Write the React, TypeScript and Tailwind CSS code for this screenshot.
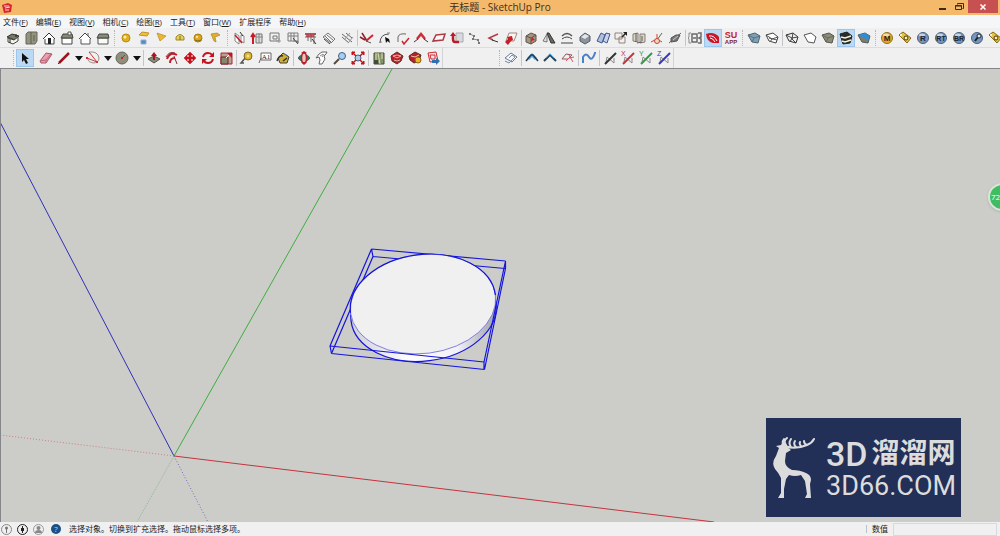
import React from 'react'

// every glyph is drawn on an 18x18 grid
const icons: Record<string, React.ReactNode> = {
  iso: (
    <>
      <path d="M3 8l5-3 7 2-4 4z" fill="#77776a" stroke="#33332c" />
      <path d="M4 9v4l5 2 5-3V8l-4 3z" fill="#f4f4ee" stroke="#44443c" />
      <path d="M6 10v4M12 5v3" stroke="#222" />
    </>
  ),
  top: (
    <>
      <path d="M4 5l2-2h9v9l-2 3H4z" fill="#94947e" stroke="#66665a" />
      <path d="M9 3v12M12 6v6" stroke="#5f5f50" />
    </>
  ),
  front: (
    <>
      <path d="M5 9v6h9V9" fill="#fff" stroke="#444" />
      <path d="M3 10l6-6 6 6" fill="#fff" stroke="#333" />
      <path d="M8 9h3v6H8z" fill="#222" stroke="none" />
    </>
  ),
  right: (
    <>
      <path d="M4 9h10v6H4z" fill="#fff" stroke="#444" />
      <path d="M5 5h9l1 4H3z" fill="#8a8a76" stroke="#44443c" />
      <path d="M10 3h3v3h-3z" fill="#fff" stroke="#555" />
    </>
  ),
  back: (
    <>
      <path d="M5 9v6h9V9" fill="#fff" stroke="#555" />
      <path d="M3 10l6-6 6 6" fill="#fff" stroke="#444" />
      <path d="M12 4v3" stroke="#666" />
    </>
  ),
  left: (
    <>
      <path d="M4 9h10v6H4z" fill="#fbfbf5" stroke="#555" />
      <path d="M5 5h9l1 4H3z" fill="#8a8a76" stroke="#44443c" />
    </>
  ),
  sphere: (
    <>
      <circle cx="9" cy="9" r="4" fill="#e2b01d" stroke="#b98a12" />
      <circle cx="8" cy="8" r="1.5" fill="#fff2a0" stroke="none" />
    </>
  ),
  planeBox: (
    <>
      <path d="M4 6l3-3 7 1-2 3z" fill="#f0bf3a" stroke="#c3922a" />
      <path d="M6 11h5v4H6z" fill="#5b86bd" stroke="#8fb0d8" />
    </>
  ),
  cone: <path d="M4 4l9 3-6 5z" fill="#ecb52c" stroke="#b98a2a" strokeWidth="0.7" />,
  dome: (
    <>
      <path d="M5 11V8q4-5 8 0v3z" fill="#e6cf58" stroke="#9a8a2a" />
      <path d="M9 7v4" stroke="#7d6f20" />
    </>
  ),
  sphereDark: (
    <>
      <circle cx="9" cy="9" r="4" fill="#dba61e" stroke="#a67b12" />
      <path d="M6 11q3 2 6 0" stroke="#8a6a14" />
      <circle cx="8" cy="8" r="1.2" fill="#ffe98c" stroke="none" />
    </>
  ),
  fan: (
    <>
      <path d="M4 5l6-1 3 2-5 2 1 5-2-1z" fill="#dfb02c" stroke="#a8842a" strokeWidth="0.7" />
      <path d="M9 8l3 4" stroke="#fff" />
    </>
  ),
  section: (
    <>
      <path d="M5 4l4 3v8l-4-3zM11 6l3 1v7l-3-2z" fill="#fff" stroke="#888" />
      <path d="M5 6l7 8" stroke="#c3202c" strokeWidth="1.5" />
      <path d="M10 3l3 4" stroke="#333" />
    </>
  ),
  post: (
    <>
      <path d="M8 5h6v9H8z" fill="#ddd" stroke="#777" />
      <path d="M11 4v10M8 8h7" stroke="#888" />
      <path d="M5 15V6M3 8l2-3 2 3" stroke="#cb1b27" strokeWidth="2" />
    </>
  ),
  squares: (
    <>
      <path d="M4 4h9v8H4zM7 7h4v3H7z" stroke="#777" />
      <path d="M10 12h5M13 9v5" stroke="#999" />
    </>
  ),
  gridIcon: (
    <>
      <path d="M4 4h10v8H4zM4 7h10M7 4v8M10 4v9" stroke="#7c7c7c" />
      <path d="M9 9l5 6M12 13h3" stroke="#444" />
    </>
  ),
  redGrid: (
    <>
      <path d="M3 5h11M3 8h11M6 5v7M9 5v8M12 5v10" stroke="#6d6d6d" />
      <path d="M3 5h11M4 7h8" stroke="#ba3540" strokeWidth="1.5" />
      <path d="M10 10l4 5" stroke="#333" />
    </>
  ),
  stairs: (
    <>
      <path d="M3 8l5-4 7 6-4 4zM5 7l6 6M7 6l6 5" fill="#f4f4f4" stroke="#777" />
      <path d="M4 10l6 5" stroke="#444" />
    </>
  ),
  hatch: (
    <>
      <path d="M4 8l7 6M4 5l10 8M8 4l6 5" stroke="#666" />
      <path d="M6 11l6-7M10 14l5-6" stroke="#999" />
    </>
  ),
  checkRed: (
    <>
      <path d="M4 4l5 8M2 8l5 3" stroke="#8b1f2b" strokeWidth="1.5" />
      <path d="M8 12l7-6" stroke="#cc2635" strokeWidth="2" />
      <path d="M8 12l5 2" stroke="#555" />
    </>
  ),
  arcCursor: (
    <>
      <path d="M4 14Q4 5 13 5" stroke="#555" />
      <path d="M9 8l1 6 1.5-2 2.5 2-1-4z" fill="#111" stroke="none" />
      <path d="M3 13h3M11 4h3" stroke="#888" />
    </>
  ),
  arcCheck: (
    <>
      <path d="M4 13V8q1-4 8-3" stroke="#666" />
      <path d="M8 12l2 3 5-6" stroke="#cf2333" strokeWidth="1.5" />
    </>
  ),
  peak: (
    <>
      <path d="M5 10l4-5 4 5" stroke="#d02b3a" strokeWidth="2.5" />
      <path d="M2 13l4-3M12 10l4 3" stroke="#333" />
    </>
  ),
  quad: <path d="M6 6l9-1-2 6-10 1z" fill="#fdf6f6" stroke="#a83a44" strokeWidth="1.5" />,
  returnArrow: (
    <>
      <path d="M8 4h7v9H8z" fill="#d8dade" stroke="#a6a9b0" />
      <path d="M11 13H7q-2 0-2-3V6" stroke="#b81e2a" strokeWidth="2.5" />
      <path d="M2 7l3-4 3 4z" fill="#b81e2a" stroke="none" />
    </>
  ),
  zigzag: (
    <>
      <path d="M4 5l4 2-1 3 5 1 1 3" stroke="#888" />
      <path d="M3 4h2v2H3zM7 6h2v2H7zM6 9h2v2H6zM11 10h2v2h-2zM12 13h2v2h-2z" fill="#777" stroke="none" />
    </>
  ),
  angle: (
    <>
      <path d="M14 5L5 9l4 2" stroke="#b23a45" strokeWidth="1.5" />
      <path d="M8 11l6 2" stroke="#333" />
    </>
  ),
  paperArrow: (
    <>
      <path d="M7 4h8l-3 8H4z" fill="#fbf6ee" stroke="#9c8a84" />
      <path d="M10 7l1 4-2 1-3 4-3-3 3-3-1-2z" fill="#cb1b27" stroke="none" />
    </>
  ),
  brownCube: (
    <>
      <path d="M4 7l5-3 5 2v6l-5 3-5-2z" fill="#a59580" stroke="#5e554a" />
      <path d="M4 7l5 2v6M9 9l5-3" stroke="#5e554a" />
      <path d="M10 8l3 3-4 1z" fill="#c22" stroke="none" />
    </>
  ),
  fins: (
    <>
      <path d="M3 12l4-7v8z" fill="#e4e4e4" stroke="#777" />
      <path d="M7 4h2l6 10h-4z" fill="#6a6a60" stroke="#333" />
    </>
  ),
  doubleArc: (
    <>
      <path d="M4 7q5-5 10 0" stroke="#555" strokeWidth="1.5" />
      <path d="M4 10q5-4 10 0M3 14h12" stroke="#444" />
    </>
  ),
  greyCube: (
    <>
      <path d="M4 8l5-4 5 3v5l-5 3-5-3z" fill="#8c939b" stroke="#555c66" />
      <path d="M5 8l4-3 4 2-4 3z" fill="#e2e6ea" stroke="none" />
    </>
  ),
  bluePanels: (
    <>
      <path d="M3 12l4-8 4 2-3 8z" fill="#aebfe0" stroke="#3f558d" />
      <path d="M9 12l3-8 4 1-3 9z" fill="#c8d4ea" stroke="#3f558d" />
    </>
  ),
  copyArrow: (
    <>
      <path d="M3 4h7v6H3zM7 8h6v6H7z" fill="#f6eeea" stroke="#8f8580" />
      <path d="M10 8l4-4" stroke="#222" strokeWidth="1.5" />
      <path d="M11 3h4v4z" fill="#222" stroke="none" />
    </>
  ),
  compare: (
    <>
      <path d="M3 5l5-1v9l-5-1zM10 5h5v8l-5 1z" fill="#d9d5ca" stroke="#847f74" />
      <path d="M6 4v9M12 7v5M7 14l5-1" stroke="#5f5b52" />
    </>
  ),
  axisStar: (
    <>
      <path d="M9 11L14 4" stroke="#55703f" />
      <path d="M9 10V5M9 10l-6 3M9 10l5 3" stroke="#cf4040" />
      <circle cx="9" cy="12" r="2.5" fill="#f4d6b8" stroke="#c8442f" />
    </>
  ),
  twig: (
    <>
      <path d="M3 14L15 4" stroke="#666" />
      <path d="M5 9l5-3 4 0-3 6-6 1z" fill="#77777a" stroke="#555" />
      <path d="M7 11l5-4" stroke="#ccc" />
    </>
  ),
  braces: (
    <>
      <path d="M5 4H3v4L2 9l1 1v4h2" stroke="#8a8a8a" />
      <path d="M6 5h5v8H6zM7 9h3M12 4h3v4l-2 1 2 1v4h-3" stroke="#6a6a6a" strokeWidth="1.5" />
    </>
  ),
  swirl: (
    <>
      <path d="M2 5q8-3 13 3v6H9q-6-1-7-9z" fill="#cc1425" stroke="none" />
      <path d="M5 7q5-1 8 5M6 9q3 0 5 4" stroke="#fff" />
    </>
  ),
  su: (
    <g fontFamily="Liberation Sans, sans-serif" fontWeight="700" stroke="none" textAnchor="middle">
      <text x="9" y="9" fontSize="9" fill="#c61f2b">SU</text>
      <text x="9" y="15" fontSize="6" fill="#7d2630">APP</text>
    </g>
  ),
  xray: (
    <>
      <path d="M3 6l7-2 5 3-2 7-6-1z" fill="#7f9fb4" stroke="#4d6472" />
      <path d="M3 6l6 3 6-2M9 9l-2 4" stroke="#56707f" />
    </>
  ),
  backEdges: (
    <>
      <path d="M3 6l7-2 5 4-2 6-7-2z" fill="#fff" stroke="#444" />
      <path d="M3 6l6 4 6-2M9 10l-2 3M6 9l8 2" stroke="#555" />
    </>
  ),
  wire: (
    <>
      <path d="M3 6l7-2 5 4-2 6-7-2z" stroke="#333" />
      <path d="M3 6l6 3 6-1M9 9l-2 4M10 4l-1 6 4 4" stroke="#444" />
    </>
  ),
  hidden: <path d="M3 6l7-2 5 4-2 6-6-1z" fill="#fff" stroke="#555" />,
  shaded: (
    <>
      <path d="M3 6l7-2 5 3-2 7-6-1z" fill="#8c8c78" stroke="#55554a" />
      <path d="M3 6l6 3 6-2M9 9l-2 4" stroke="#6a6a5c" />
    </>
  ),
  textured: (
    <>
      <path d="M3 5l7-2 5 4-2 7-7 1z" fill="#2a2a26" stroke="#222" />
      <path d="M4 8l4 1 6-2M5 12l3 1 6-2" stroke="#f6f2dc" strokeWidth="1.5" />
    </>
  ),
  mono: (
    <>
      <path d="M3 6l7-2 5 3-2 7-6-1z" fill="#7d7d6c" stroke="#4b5a60" />
      <path d="M3 6l7-2 5 3-6 2z" fill="#2f8fd6" stroke="none" />
      <path d="M9 9l6-2-2 4z" fill="#2f8fd6" stroke="none" />
    </>
  ),
  goldTag: (
    <>
      <path d="M3 6l4-3 8 6-4 5z" fill="#e6c23e" stroke="#85681a" />
      <circle cx="10" cy="9" r="2" fill="#fff0a0" stroke="#44360d" />
      <circle cx="5" cy="6" r="1" fill="#fff" stroke="none" />
    </>
  ),
  cursor: <path d="M6 4v9l2-2 2 4 2-1-2-4h3z" fill="#111" stroke="none" />,
  eraser: (
    <>
      <path d="M3 12L9 4l6 1-6 9H4z" fill="#ee9dae" stroke="#a55a68" />
      <path d="M3 12l6-1 5-6M9 11v3" stroke="#b76878" />
    </>
  ),
  pencil: (
    <>
      <path d="M4 14L14 4" stroke="#9c1620" strokeWidth="2.5" />
      <path d="M3 15l3-3" stroke="#333" />
    </>
  ),
  arc: (
    <>
      <path d="M5 3q9-1 10 6 0 5-6 5-4 0-6-5" stroke="#9a8f88" />
      <path d="M3 9l10 4L5 3" stroke="#d2303c" />
      <path d="M2 8h2v2H2zM12 12h2v2h-2z" fill="#d2303c" stroke="none" />
    </>
  ),
  circle: (
    <>
      <circle cx="9" cy="9" r="6" fill="#8f8f7c" stroke="#66665a" />
      <path d="M9 9l3-3" stroke="#c8202c" />
      <path d="M8 8h2v2H8z" fill="#c8202c" stroke="none" />
    </>
  ),
  pushPull: (
    <>
      <path d="M3 10l6-3 6 3-6 4z" fill="#8a8a76" stroke="#55554a" />
      <path d="M9 11V6" stroke="#a8141f" strokeWidth="2" />
      <path d="M6 7l3-4 3 4z" fill="#a8141f" stroke="none" />
    </>
  ),
  offset: (
    <>
      <path d="M4 10q3-8 10-4M7 14q0-5 5-5" stroke="#c21c28" strokeWidth="2" />
      <path d="M3 8q3-6 9-4M11 7l3 8" stroke="#8c2a32" />
    </>
  ),
  move: (
    <path d="M9 3l3 3h-2v2h2V6l3 3-3 3v-2h-2v2h2l-3 3-3-3h2v-2H6v2L3 9l3-3v2h2V6H6z" fill="#c5121f" stroke="#c5121f" strokeWidth="0.5" />
  ),
  rotate: (
    <>
      <path d="M4 8q1-4 5-4 3 0 4 2M14 10q-1 4-5 4-3 0-4-2" stroke="#c5121f" strokeWidth="2" />
      <path d="M15 3v5h-5zM3 15v-5h5z" fill="#c5121f" stroke="none" />
    </>
  ),
  scale: (
    <>
      <path d="M4 4h11v11H4z" fill="#b7a093" stroke="#a52a32" />
      <path d="M4 8h7v7H4z" fill="#86866f" stroke="#7a1c22" />
      <path d="M9 9l4-4" stroke="#fff" />
      <path d="M10 4h5v5z" fill="#c5121f" stroke="none" />
    </>
  ),
  tape: (
    <>
      <path d="M8 8l-5 6h3" stroke="#555" strokeWidth="1.5" />
      <circle cx="10" cy="7" r="4" fill="#d9b437" stroke="#84691a" />
      <circle cx="10" cy="7" r="1.5" fill="#f3e08a" stroke="none" />
    </>
  ),
  textLabel: (
    <>
      <path d="M5 4h10v7H5z" fill="#fff" stroke="#666" />
      <path d="M5 9l-2 5" stroke="#666" />
      <text x="10" y="10" fontSize="7" textAnchor="middle" fill="#222" stroke="none" fontFamily="Liberation Serif, serif">A1</text>
    </>
  ),
  paint: (
    <>
      <path d="M4 9l5-5 6 4-2 6H6z" fill="#cfae3a" stroke="#44402c" />
      <path d="M3 12q2-6 6-5M9 12l4-3" stroke="#333" strokeWidth="1.5" />
      <path d="M11 5l3 2" stroke="#487fc0" />
    </>
  ),
  orbit: (
    <>
      <ellipse cx="9" cy="9" rx="5.5" ry="3" fill="#2f7d5b" stroke="#2f5d4b" />
      <ellipse cx="9" cy="9" rx="2.5" ry="5" fill="#e8c4c0" stroke="#b81e2a" strokeWidth="1.5" />
      <path d="M6 4h6L9 2zM9 16l-3-3h6z" fill="#b81e2a" stroke="none" />
    </>
  ),
  pan: (
    <>
      <path d="M3 9l3-4 3-2h5l-1 2-2 2 1 3-3 5H6l1-4-1-3z" fill="#fff" stroke="#666" />
      <path d="M7 7l3-2M9 8l2-3" stroke="#888" />
    </>
  ),
  zoomIcon: (
    <>
      <path d="M8 10l-5 5" stroke="#5a4a38" strokeWidth="2" />
      <circle cx="11" cy="7" r="3.5" fill="#a9cdf0" stroke="#3e6288" />
    </>
  ),
  extents: (
    <>
      <circle cx="9" cy="9" r="3" fill="#a8cbea" stroke="#44627f" />
      <path d="M3 3l4 4M15 3l-4 4M3 15l4-4M15 15l-4-4" stroke="#c5121f" strokeWidth="1.5" />
      <path d="M3 3h3L3 6zM15 3v3l-3-3zM3 15v-3l3 3zM15 15h-3l3-3z" fill="#c5121f" stroke="#c5121f" />
    </>
  ),
  map: (
    <>
      <path d="M4 4h10v11H4z" fill="#81936a" stroke="#454c38" />
      <path d="M6 4v11M8 4l2 11M12 4v6" stroke="#e4dfb0" />
      <path d="M4 11h4v4H4z" fill="#454c38" stroke="none" />
    </>
  ),
  ruby: (
    <>
      <path d="M3 7l6-4 6 4-2 5-4 3-5-3z" fill="#b6202a" stroke="#6d2a2a" />
      <path d="M5 7l4-1 4 1-4 2zM6 11l3 1 3-1" stroke="#e3b3a0" />
    </>
  ),
  rubyGold: (
    <>
      <path d="M3 7l6-4 6 3-2 6-5 2-4-3z" fill="#b6202a" stroke="#5d2a22" />
      <path d="M5 7l4 1 4-2" stroke="#edc8b0" />
      <circle cx="12" cy="11" r="3" fill="#e6b32a" stroke="#8a6514" />
    </>
  ),
  layoutSend: (
    <>
      <path d="M4 4l8-1 2 9-8 1z" fill="#fbe3e3" stroke="#cc2a35" />
      <path d="M6 6h5v4H7z" stroke="#cc2a35" />
      <path d="M8 11h4V9l4 3-4 4v-2H8z" fill="#2f6fb4" stroke="none" />
    </>
  ),
  smooth: (
    <>
      <path d="M3 9l6-5 6 4-5 5z" fill="#f5f7fa" stroke="#6a7b95" />
      <path d="M7 9l3-3 3 2-3 3M3 12l4 2 3-3" stroke="#7b8ba2" />
    </>
  ),
  roofDark: (
    <>
      <path d="M5 10l4-4 4 4" stroke="#56a8e0" strokeWidth="3" />
      <path d="M3 12l5-6h2l5 6" stroke="#243a52" strokeWidth="1.5" />
    </>
  ),
  roof: (
    <>
      <path d="M3 12l6-6 6 6" stroke="#27465e" strokeWidth="2" />
      <path d="M5 9l4-4 4 4" stroke="#35a0d8" />
    </>
  ),
  redLoop: (
    <>
      <path d="M3 10l4-5 6 1-4 4z" stroke="#8a5a60" />
      <path d="M7 12l3-3 5-1M10 6l4 7" stroke="#e05561" />
    </>
  ),
  curve: <path d="M3 14V8q3-5 6 0t6-4V3" stroke="#4a80c8" strokeWidth="2" />,
}

const axis = (color: string, letter: string) => (
  <>
    <path d="M5 13l1-5 7 6V9" stroke="#8b8b8b" />
    <path d="M4 15L15 4" stroke={color} strokeWidth="2" />
    <text x="2" y="7" fontSize="7" fill={color} stroke="none" fontFamily="Liberation Sans, sans-serif">{letter}</text>
  </>
)

const badge = (fill: string, ring: string, letter: string) => (
  <>
    <circle cx="9" cy="9" r="5.5" fill={fill} stroke={ring} />
    <ellipse cx="8" cy="6" rx="3" ry="1.5" fill="#fff" fillOpacity="0.6" stroke="none" />
    <text x="9" y="12" fontSize={letter.length > 1 ? 7 : 8} fontWeight="700" textAnchor="middle" fill="#1d2430" stroke="none" fontFamily="Liberation Sans, sans-serif">{letter}</text>
  </>
)

icons.axisN = axis('#333333', '')
icons.axisX = axis('#c8323c', 'X')
icons.axisY = axis('#2f9a48', 'Y')
icons.axisZ = axis('#3838c8', 'Z')
icons.badgeM = badge('#e5a91f', '#96701c', 'M')
icons.badgeR = badge('#7796bd', '#47617f', 'R')
icons.badgeRT = badge('#7796bd', '#47617f', 'RT')
icons.badgeBR = badge('#7796bd', '#47617f', 'BR')
icons.badgeLight = (
  <>
    <circle cx="9" cy="9" r="5.5" fill="#7796bd" stroke="#47617f" />
    <path d="M7 12l3-4" stroke="#1d2430" strokeWidth="2" />
    <circle cx="11" cy="7" r="2" fill="#dfe9f6" stroke="#1d2430" />
  </>
)

function ToolButton({ name, active }: { name: string; active?: boolean }) {
  return (
    <button
      aria-label={name}
      className={`flex h-[18px] w-[18px] shrink-0 items-center justify-center ${active ? 'bg-[#bcd9f3] outline outline-1 -outline-offset-1 outline-[#9cc6ec]' : ''}`}
    >
      <svg viewBox="0 0 18 18" className="h-[18px] w-[18px]" fill="none" stroke="#333" strokeWidth="1">
        {icons[name]}
      </svg>
    </button>
  )
}

function DropArrow({ label }: { label: string }) {
  return (
    <button aria-label={label} className="flex h-[18px] w-[11px] shrink-0 items-center justify-center">
      <svg viewBox="0 0 8 5" className="h-[5px] w-2"><path d="M0 0h8L4 5z" fill="#111" /></svg>
    </button>
  )
}

function Line({ className }: { className: string }) {
  return <span className={`flex h-4 shrink-0 justify-center ${className}`}><span className="w-px bg-[#c3c5c8]" /></span>
}

function Grip() {
  return <span className="flex h-4 w-[5px] shrink-0 justify-center"><span className="border-l border-dotted border-[#b4b6ba]" /></span>
}

const menus = [
  ['文件', 'F'],
  ['编辑', 'E'],
  ['视图', 'V'],
  ['相机', 'C'],
  ['绘图', 'R'],
  ['工具', 'T'],
  ['窗口', 'W'],
  ['扩展程序', ''],
  ['帮助', 'H'],
]

const topGroups = [
  { end: 'grip', items: ['iso', 'top', 'front', 'right', 'back', 'left'] },
  { end: 'grip', items: ['sphere', 'planeBox', 'cone', 'dome', 'sphereDark', 'fan'] },
  { end: 'line', items: ['section', 'post', 'squares', 'gridIcon', 'redGrid', 'stairs', 'hatch'] },
  { end: 'line', items: ['checkRed', 'arcCursor', 'arcCheck', 'peak', 'quad', 'returnArrow', 'zigzag', 'angle', 'paperArrow'] },
  { end: 'line', items: ['brownCube', 'fins', 'doubleArc', 'greyCube', 'bluePanels', 'copyArrow', 'compare', 'axisStar', 'twig'] },
  { end: 'grip', items: ['braces', 'swirl', 'su'] },
  { end: 'line', items: ['xray', 'backEdges'] },
  { end: 'grip', items: ['wire', 'hidden', 'shaded', 'textured', 'mono'] },
  { end: '', items: ['badgeM', 'goldTag', 'badgeR', 'badgeRT', 'badgeBR', 'badgeLight', 'goldTag'] },
]

const editGroups = [
  ['pushPull', 'offset', 'move', 'rotate', 'scale'],
  ['tape', 'textLabel', 'paint'],
  ['orbit', 'pan', 'zoomIcon', 'extents'],
  ['map', 'ruby', 'rubyGold', 'layoutSend'],
]

const curveGroups = [
  ['smooth'],
  ['roofDark', 'roof', 'redLoop'],
  ['curve'],
  ['axisN', 'axisX', 'axisY', 'axisZ'],
]

function Groups({ groups }: { groups: string[][] }) {
  return (
    <>
      {groups.map((group, i) => (
        <React.Fragment key={i}>
          {i > 0 && <Line className="w-[3px]" />}
          {group.map((name) => <ToolButton key={name} name={name} />)}
        </React.Fragment>
      ))}
    </>
  )
}

function TitleBar() {
  return (
    <header className="relative flex h-[15px] shrink-0 items-center bg-[#f4b96b] pl-[2px] pr-3">
      <svg viewBox="0 0 10 10" className="h-[10px] w-[10px]">
        <path d="M0 2l6-2 4 2-1 7-7 1z" fill="#d8262f" />
        <path d="M2 3h5M3 5l5-1M3 7h4" stroke="#fff" strokeWidth="0.8" />
      </svg>
      <h1 className="flex-1 text-center text-[10px] leading-[15px] text-[#40301c]">无标题 - SketchUp Pro</h1>
      <div className="absolute right-[2px] top-0 flex h-[13px]">
        <button aria-label="Minimize" className="flex w-4 items-end justify-center pb-[3px]">
          <span className="h-[2px] w-[7px] bg-[#3b2c18]" />
        </button>
        <button aria-label="Restore" className="flex w-[18px] items-center justify-center">
          <svg viewBox="0 0 9 9" className="h-[9px] w-[9px]" fill="none" stroke="#3b2c18">
            <path d="M2.5 2.5v-1h6v5h-1M0.5 3.5h6v4h-6zM0.5 4h6" />
          </svg>
        </button>
        <button aria-label="Close" className="flex w-[30px] items-center justify-center bg-[#c75050]">
          <svg viewBox="0 0 6 6" className="h-[6px] w-[6px]" stroke="#fff" strokeWidth="1.5"><path d="M0.5 0.5l5 5M5.5 0.5l-5 5" /></svg>
        </button>
      </div>
    </header>
  )
}

function Scene() {
  return (
    <svg viewBox="1 69 999 453" preserveAspectRatio="xMinYMin slice" className="absolute inset-0 h-full w-full" fill="none">
      <defs>
        <linearGradient id="side" x1="-73" x2="73" y1="0" y2="0" gradientUnits="userSpaceOnUse">
          <stop offset="0" stopColor="#d0d0da" />
          <stop offset="0.35" stopColor="#fdfdff" />
          <stop offset="0.7" stopColor="#f1f1f6" />
          <stop offset="0.85" stopColor="#c4c4cc" />
          <stop offset="1" stopColor="#a2a2ac" />
        </linearGradient>
      </defs>
      {/* axes */}
      <path d="M174 456L392 69" stroke="#3fae3f" />
      <path d="M174 456L0 122" stroke="#3030b8" />
      <path d="M174 456L714 522" stroke="#c4343c" />
      <path d="M174 456L0 435" stroke="#cc8080" strokeDasharray="1 2" />
      <path d="M174 456L137 522" stroke="#93b893" strokeDasharray="1 1" />
      <path d="M174 456L208 522" stroke="#7070b8" strokeDasharray="1 2" />
      {/* back of the bounding box */}
      <g stroke="#1414dc" strokeWidth="1.2">
        <path d="M371.5 249L505.5 261M373 256.5L505 268.5M371.5 249l1.5 7.5M371.5 249L330 346M373 256.5L331.5 353.5" />
      </g>
      {/* disc: side, top face, then its upper rim */}
      <g strokeWidth="1.2">
        <ellipse rx="73" ry="49" transform="translate(423.5 312) rotate(-7)" fill="url(#side)" stroke="#1414dc" />
        <ellipse rx="73" ry="49.5" transform="translate(423 304) rotate(-7)" fill="#f0f0f0" stroke="#6a6ad8" strokeWidth="0.8" />
        <ellipse rx="73" ry="49.5" transform="translate(423 304) rotate(-7)" pathLength="100" strokeDasharray="50 50" strokeDashoffset="-50" stroke="#1414dc" />
      </g>
      {/* front of the bounding box */}
      <g stroke="#1414dc" strokeWidth="1.2">
        <path d="M330 346L484 362M331.5 353.5L484.5 369.5M330 346l1.5 7.5M484 362v7.5M505.5 261v7.5M505.5 261L484 362M505.5 268.5L484.5 369.5" />
      </g>
    </svg>
  )
}

function Watermark() {
  return (
    <div className="absolute bottom-[5px] right-[39px] flex h-[99px] w-[195px] items-center bg-[#222f57] pl-[6px] text-[#dcdcdc]">
      <svg viewBox="0 0 46 62" className="h-[62px] w-[46px] shrink-0" fill="#dcdcdc">
        <path d="M4 9l5-1 2-4 3 5 5 4-5 3-1 8q0 6 7 9 8 0 14 3 5 2 5 7l-1 4 1 14h-6l2-4-2-13-4-6q-6 2-12 0l-3 4-2 10v9H6l3-5V41q-3-6-6-9-4-6 1-13l3-8z" />
        <path d="M13 10Q9 6 12 2M14 8q-3-4 1-7M13 9q10 4 22-1 5-2 7-6M19 10q-3-4 0-8M24 10q-3-3-1-6M29 9q-2-2-1-4M35 8q-3-1-3-4" fill="none" stroke="#dcdcdc" strokeWidth="2" strokeLinecap="round" />
      </svg>
      <div className="ml-2 flex flex-col gap-1 whitespace-nowrap font-[Roboto,'Noto_Sans_CJK_SC',sans-serif]">
        <p className="flex items-center gap-1 text-[28px] font-bold leading-8">
          <span className="text-[34px] font-medium">3D</span>
          <span>溜溜网</span>
        </p>
        <p className="text-[27px] leading-6">3D66.COM</p>
      </div>
    </div>
  )
}

function StatusBar() {
  return (
    <footer className="flex h-[14px] shrink-0 items-center bg-[#f0f0f0] text-[8px] text-[#222]">
      <div className="flex w-[69px] items-center gap-[5px] pl-px">
        <svg viewBox="0 0 11 11" className="h-[11px] w-[11px]" fill="none" stroke="#888">
          <circle cx="5.5" cy="5.5" r="5" />
          <circle cx="5.5" cy="4" r="1.5" fill="#777" stroke="none" />
          <path d="M5.5 4v5" stroke="#777" />
        </svg>
        <svg viewBox="0 0 11 11" className="h-[11px] w-[11px]" fill="none" stroke="#222">
          <circle cx="5.5" cy="5.5" r="5" />
          <path d="M5.5 2v7M4.5 4v3M6.5 4v3" />
        </svg>
        <svg viewBox="0 0 11 11" className="h-[11px] w-[11px]" fill="#888">
          <circle cx="5.5" cy="5.5" r="5" fill="none" stroke="#999" />
          <circle cx="5.5" cy="4" r="2" />
          <path d="M2 9q0-3 3.5-3T9 9z" />
        </svg>
        <button aria-label="Help" className="ml-[2px] h-[10px] w-[10px] rounded-full bg-[#1c4f86] text-center text-[8px] leading-[10px] text-[#b9d8f4]">?</button>
      </div>
      <p className="flex-1">选择对象。切换到扩充选择。拖动鼠标选择多项。</p>
      <label htmlFor="measure" className="flex items-center gap-[5px]">
        <span className="h-2 w-px bg-[#b9c3cf]" />
        数值
      </label>
      <input id="measure" className="ml-[5px] mr-[3px] h-[13px] w-[104px] border border-[#d3dae2] bg-[#f0f0f0] px-1 outline-none" />
    </footer>
  )
}

function App() {
  return (
    <div className="flex h-screen flex-col overflow-hidden bg-[#f0f0f0] font-['Open_Sans','Noto_Sans_CJK_SC',sans-serif]">
      <TitleBar />
      <nav className="flex h-[13px] shrink-0 items-center gap-2 bg-[#f5f6f7] pl-[3px] text-[8px] leading-[13px] text-[#222]">
        {menus.map(([label, key]) => (
          <button key={label} className="whitespace-nowrap">
            {label}{key && <>(<u>{key}</u>)</>}
          </button>
        ))}
      </nav>

      {/* Views, solids, plugins and styles */}
      <div className="flex h-5 shrink-0 items-center overflow-hidden border-b border-[#dcdddf] pl-1">
        {topGroups.map((group, i) => (
          <React.Fragment key={i}>
            {group.items.map((name, j) => (
              <ToolButton key={j} name={name} active={name === 'swirl' || name === 'textured'} />
            ))}
            {group.end === 'grip' && <Grip />}
            {group.end === 'line' && <Line className="w-[2px]" />}
          </React.Fragment>
        ))}
      </div>

      {/* Drawing and editing tools */}
      <div className="flex h-5 shrink-0 items-center">
        <div className="flex h-full items-center border-r border-[#d3d4d6] pl-[11px]">
          <Grip />
          <ToolButton name="cursor" active />
          <span className="w-[3px]" />
          <ToolButton name="eraser" />
          <ToolButton name="pencil" />
          <DropArrow label="Line tools" />
          <ToolButton name="arc" />
          <DropArrow label="Arc tools" />
          <ToolButton name="circle" />
          <DropArrow label="Shape tools" />
          <Line className="w-[3px]" />
          <Groups groups={editGroups} />
        </div>
        <div className="ml-[54px] flex h-full items-center border-r border-[#d3d4d6]">
          <Grip />
          <Groups groups={curveGroups} />
        </div>
      </div>

      <main className="relative flex-1 overflow-hidden border-l border-t border-[#85868a] bg-[#cccdc8]">
        <Scene />
        <Watermark />
        <div className="absolute right-[-16px] top-[114px] h-7 w-7 rounded-full border-2 border-[#d8e6da] bg-[#40bd62] pl-px text-[8px] leading-6 text-white shadow">
          72
        </div>
      </main>
      <StatusBar />
    </div>
  )
}

export default App
